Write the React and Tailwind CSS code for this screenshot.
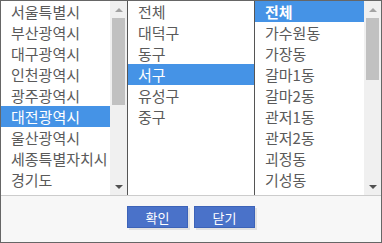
import React from "react";

const sido = ["서울특별시","부산광역시","대구광역시","인천광역시","광주광역시","대전광역시","울산광역시","세종특별자치시","경기도"];
const gu = ["전체","대덕구","동구","서구","유성구","중구"];
const dong = ["전체","가수원동","가장동","갈마1동","갈마2동","관저1동","관저2동","괴정동","기성동"];

function Scrollbar({ thumbH }) {
  return (
    <div className="w-[17px] h-full bg-[#f0f0f0] flex flex-col shrink-0">
      <div className="h-[17px] flex items-center justify-center shrink-0">
        <svg width="8" height="4" viewBox="0 0 8 4"><path d="M0 4 L4 0 L8 4 Z" fill="#a3a3a3" /></svg>
      </div>
      <div className="flex-1 flex flex-col px-[2px]">
        <div style={{ height: thumbH }} className="bg-[#c1c1c1] w-full" />
      </div>
      <div className="h-[17px] flex items-center justify-center shrink-0">
        <svg width="8" height="4" viewBox="0 0 8 4"><path d="M0 0 L8 0 L4 4 Z" fill="#505050" /></svg>
      </div>
    </div>
  );
}

function List({ items, selected, bold }) {
  return (
    <div className="flex-1 h-full overflow-hidden">
      {items.map((t, i) => (
        <div
          key={i}
          className={
            "h-[21px] leading-[21px] pl-[10px] text-[15px] whitespace-nowrap " +
            (i === selected
              ? "bg-[#4593e6] text-white" + (bold ? " font-bold" : "")
              : "text-[#5a5a5a]")
          }
        >
          {t}
        </div>
      ))}
    </div>
  );
}

export default function App() {
  return (
    <div
      className="w-[382px] h-[243px] border border-[#666666] bg-white flex flex-col overflow-hidden"
      style={{ fontFamily: '"Noto Sans CJK KR", "Noto Sans", sans-serif' }}
    >
      <div className="flex h-[194px] shrink-0">
        <div className="w-[126px] h-full border-r border-[#555555] flex box-content">
          <List items={sido} selected={5} />
          <Scrollbar thumbH={87} />
        </div>
        <div className="w-[126px] h-full border-r border-[#555555] flex box-content">
          <List items={gu} selected={3} />
        </div>
        <div className="w-[126px] h-full flex">
          <List items={dong} selected={0} bold />
          <Scrollbar thumbH={62} />
        </div>
      </div>
      <div className="flex-1 border-t border-[#cccccc] bg-[#f7f7f7] flex justify-center gap-[6px] pt-[10px]">
        <button className="w-[61px] h-[22px] bg-[#4a72c9] border border-[#3d63b8] text-white text-[13px] leading-none shadow-[2px_2px_0_#e2e2e2]">확인</button>
        <button className="w-[61px] h-[22px] bg-[#4a72c9] border border-[#3d63b8] text-white text-[13px] leading-none shadow-[2px_2px_0_#e2e2e2]">닫기</button>
      </div>
    </div>
  );
}
